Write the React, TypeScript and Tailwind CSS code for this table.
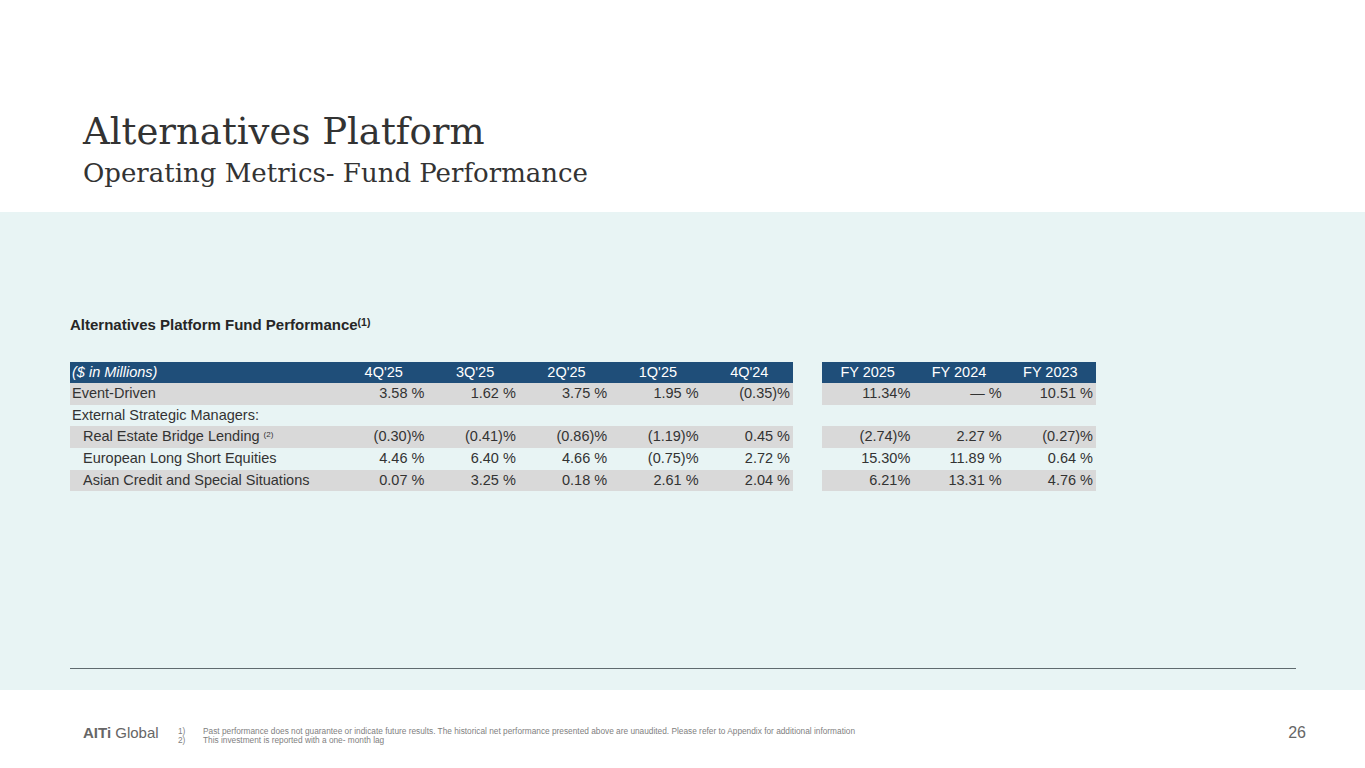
import React from "react";

type Row = { label: string; sup?: string; indent?: boolean; shaded: boolean; q: string[]; fy: string[] };

const rows: Row[] = [
  { label: "Event-Driven", shaded: true, q: ["3.58 %", "1.62 %", "3.75 %", "1.95 %", "(0.35)%"], fy: ["11.34%", "— %", "10.51 %"] },
  { label: "External Strategic Managers:", shaded: false, q: ["", "", "", "", ""], fy: ["", "", ""] },
  { label: "Real Estate Bridge Lending", sup: "(2)", indent: true, shaded: true, q: ["(0.30)%", "(0.41)%", "(0.86)%", "(1.19)%", "0.45 %"], fy: ["(2.74)%", "2.27 %", "(0.27)%"] },
  { label: "European Long Short Equities", indent: true, shaded: false, q: ["4.46 %", "6.40 %", "4.66 %", "(0.75)%", "2.72 %"], fy: ["15.30%", "11.89 %", "0.64 %"] },
  { label: "Asian Credit and Special Situations", indent: true, shaded: true, q: ["0.07 %", "3.25 %", "0.18 %", "2.61 %", "2.04 %"], fy: ["6.21%", "13.31 %", "4.76 %"] },
];

const qHeads = ["4Q'25", "3Q'25", "2Q'25", "1Q'25", "4Q'24"];
const fyHeads = ["FY 2025", "FY 2024", "FY 2023"];

export default function App() {
  return (
    <div className="w-[1365px] h-[768px] bg-white flex flex-col overflow-hidden" style={{ fontFamily: '"Liberation Sans", Arial, sans-serif' }}>
      {/* Title area */}
      <div className="h-[212px] pl-[83px] pt-[110px] text-[#333333]" style={{ fontFamily: '"DejaVu Serif", "Liberation Serif", serif' }}>
        <div className="text-[37px] leading-[44px]">Alternatives Platform</div>
        <div className="text-[26px] leading-[30px] mt-[4px]">Operating Metrics- Fund Performance</div>
      </div>

      {/* Teal panel */}
      <div className="h-[478px] bg-[#e8f4f4] flex flex-col px-[70px]">
        <div className="pt-[104px] text-[15px] font-bold text-[#262626] leading-[18px]">
          Alternatives Platform Fund Performance<sup className="text-[10.5px] font-bold relative -top-[4px]">(1)</sup>
        </div>

        <div className="mt-[28px] flex flex-col text-[14.5px] text-[#333333]">
          {/* header */}
          <div className="flex gap-[29px] h-[21px]">
            <div className="w-[723px] bg-[#1f4e79] text-white grid grid-cols-[266px_repeat(5,1fr)] items-center">
              <div className="italic pl-[2px]">($ in Millions)</div>
              {qHeads.map((h) => (
                <div key={h} className="text-center pl-[4px]">{h}</div>
              ))}
            </div>
            <div className="w-[274px] bg-[#1f4e79] text-white grid grid-cols-3 items-center">
              {fyHeads.map((h) => (
                <div key={h} className="text-center">{h}</div>
              ))}
            </div>
          </div>
          {rows.map((r) => (
            <div key={r.label} className="flex gap-[29px] h-[21.7px]">
              <div className={`w-[723px] grid grid-cols-[266px_repeat(5,1fr)] items-center ${r.shaded ? "bg-[#d9d9d9]" : ""}`}>
                <div className={r.indent ? "pl-[13px] whitespace-nowrap" : "pl-[2px] whitespace-nowrap"}>
                  {r.label}
                  {r.sup && <sup className="text-[8px] ml-[4px] -top-[4px]">{r.sup}</sup>}
                </div>
                {r.q.map((v, i) => (
                  <div key={i} className="text-right pr-[3px]">{v}</div>
                ))}
              </div>
              <div className={`w-[274px] grid grid-cols-3 items-center ${r.shaded ? "bg-[#d9d9d9]" : ""}`}>
                {r.fy.map((v, i) => (
                  <div key={i} className="text-right pr-[3px]">{v}</div>
                ))}
              </div>
            </div>
          ))}
        </div>

        <div className="mt-auto mb-[21px] h-px bg-[#5f6a6e] w-[1226px]" />
      </div>

      {/* Footer */}
      <div className="flex-1 relative flex items-start pt-[34px] pl-[83px] pr-[59px]">
        <div className="text-[15px] text-[#666666] leading-[18px] w-[95px]">
          <span className="font-bold">AITi</span> Global
        </div>
        <div className="pt-[3px] text-[8.3px] leading-[9px] text-[#7f7f7f]">
          <div className="flex">
            <span className="w-[25px]">1)</span>
            <span>Past performance does not guarantee or indicate future results. The historical net performance presented above are unaudited. Please refer to Appendix for additional information</span>
          </div>
          <div className="flex">
            <span className="w-[25px]">2)</span>
            <span>This investment is reported with a one- month lag</span>
          </div>
        </div>
        <div className="ml-auto text-[16px] text-[#666666] leading-[18px]">26</div>
      </div>
    </div>
  );
}
